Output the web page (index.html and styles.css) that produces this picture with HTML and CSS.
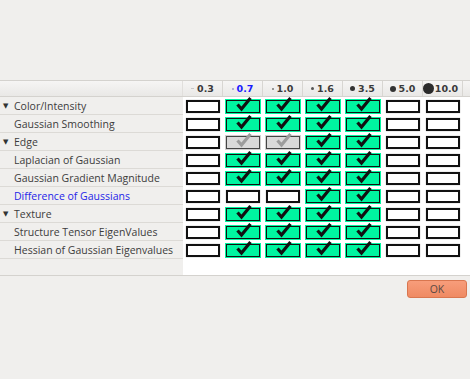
FILE: index.html
```html
<!DOCTYPE html>
<html>
<head>
<meta charset="utf-8">
<link rel="stylesheet" href="styles.css">
</head>
<body>
<div class="spacer"></div>
<div class="view">
  <div class="grid">
    <div class="corner"></div>
    <div class="hcell"><span class="dot d1"></span>0.3</div>
    <div class="hcell sel"><span class="dot d2"></span>0.7</div>
    <div class="hcell"><span class="dot d3"></span>1.0</div>
    <div class="hcell"><span class="dot d4"></span>1.6</div>
    <div class="hcell"><span class="dot d5"></span>3.5</div>
    <div class="hcell"><span class="dot d6"></span>5.0</div>
    <div class="hcell"><span class="dot d7"></span>10.0</div>
    <div class="hend"></div>
  </div>
  <div class="body">
    <div class="labels" id="labels"></div>
    <div class="cells" id="cells"></div>
  </div>
</div>
<div class="footer">
  <button class="ok">OK</button>
</div>
<script src="app.js"></script>
</body>
</html>
```

FILE: app.js
```js
const rows = [
  ["Color/Intensity", true, false, "0111100"],
  ["Gaussian Smoothing", false, false, "0111100"],
  ["Edge", true, false, "0gg1100"],
  ["Laplacian of Gaussian", false, false, "0111100"],
  ["Gaussian Gradient Magnitude", false, false, "0111100"],
  ["Difference of Gaussians", false, true, "0001100"],
  ["Texture", true, false, "0111100"],
  ["Structure Tensor EigenValues", false, false, "0111100"],
  ["Hessian of Gaussian Eigenvalues", false, false, "0111100"]
];
const check = '<svg class="chk" width="18" height="16" viewBox="0 0 18 16"><path d="M2.5 8.5 L6.5 13 L15.5 2" fill="none" stroke-width="3.2" stroke-linecap="butt" stroke-linejoin="miter"/></svg>';
const labels = document.getElementById("labels");
const cells = document.getElementById("cells");
rows.forEach(r => {
  const l = document.createElement("div");
  l.className = "lab" + (r[2] ? " blue" : "");
  l.innerHTML = (r[1] ? '<span class="tri">▼</span>' : '<span class="tri"></span>') + r[0];
  labels.appendChild(l);
  const row = document.createElement("div");
  row.className = "crow";
  r[3].split("").forEach(c => {
    const cell = document.createElement("div");
    cell.className = "cell";
    const b = document.createElement("div");
    b.className = "box" + (c === "1" ? " on" : c === "g" ? " gray" : "");
    if (c !== "0") b.innerHTML = check;
    cell.appendChild(b);
    row.appendChild(cell);
  });
  cells.appendChild(row);
});
```

FILE: styles.css
```css
html, body {
  margin: 0;
  padding: 0;
}
body {
  width: 470px;
  height: 379px;
  background: #f0efed;
  font-family: "Open Sans", "DejaVu Sans", sans-serif;
  color: #3c3c3c;
  overflow: hidden;
}
.spacer {
  height: 80px;
}
.view {
  border-top: 1px solid #d4d2ce;
  border-bottom: 1px solid #d4d2ce;
  height: 194px;
  display: flex;
  flex-direction: column;
}
.grid {
  display: grid;
  grid-template-columns: 183px repeat(7, 40px) 7px;
  height: 15px;
  background: linear-gradient(#f6f5f4, #e9e8e6);
  border-bottom: 1px solid #d4d2ce;
}
.corner {
  border-right: 1px solid #e1dfdc;
}
.hcell {
  display: flex;
  align-items: center;
  justify-content: center;
  gap: 3px;
  font-family: "DejaVu Sans", sans-serif;
  font-weight: bold;
  font-size: 9.5px;
  color: #3a3a3a;
  border-right: 1px solid #d8d6d2;
}
.hcell.sel {
  color: #1a1aff;
}
.dot {
  display: inline-block;
  border-radius: 50%;
  background: #333;
}
.d1 { width: 3px; height: 1px; background: #c8c8c8; border-radius: 0; }
.d2 { width: 2px; height: 2px; background: #9a9ac8; }
.d3 { width: 2px; height: 2px; background: #777; }
.d4 { width: 3px; height: 3px; background: #555; }
.d5 { width: 5px; height: 5px; background: #333; }
.d6 { width: 6px; height: 6px; background: #333; }
.d7 { width: 11px; height: 11px; background: #2b2b2b; margin-left: -4px; margin-right: -2px; }
.body {
  flex: 1;
  display: flex;
}
.labels {
  width: 183px;
  background: #f0efed;
  display: flex;
  flex-direction: column;
}
.lab {
  height: 17px;
  border-bottom: 1px solid #dcdad6;
  display: flex;
  align-items: center;
  font-size: 10.5px;
  color: #3c3c3c;
  white-space: nowrap;
}
.lab.blue {
  color: #2525e8;
}
.tri {
  display: inline-block;
  width: 14px;
  padding-left: 3px;
  box-sizing: border-box;
  font-size: 7px;
  color: #333;
}
.cells {
  flex: 1;
  background: #fff;
  display: flex;
  flex-direction: column;
}
.crow {
  display: flex;
  height: 18px;
}
.cell {
  width: 40px;
  display: flex;
  align-items: center;
  justify-content: center;
  padding-top: 1px;
  box-sizing: border-box;
}
.box {
  position: relative;
  width: 34px;
  height: 13px;
  box-sizing: border-box;
  border: 2px solid #111;
  background: #fff;
  box-shadow: 0 0 1px #999;
}
.box.on {
  background: #00f5a0;
  border: 1px solid #111;
  box-shadow: 0 0 0 1px #00f5a0;
}
.box.gray {
  background: #d9d9d9;
  border: 1px solid #444;
  box-shadow: 0 0 0 1px #cfcfcf;
}
.chk {
  position: absolute;
  left: 8px;
  top: -5px;
}
.chk path {
  stroke: #111;
}
.box.gray .chk path {
  stroke: #9c9c9c;
}
.footer {
  display: flex;
  justify-content: flex-end;
  padding: 4px 3px 0 0;
}
.ok {
  width: 60px;
  height: 18px;
  border: 1px solid #d9764f;
  border-radius: 3px;
  background: linear-gradient(#f79d7b, #ef8a63);
  color: #5a4a44;
  font-family: "Open Sans", sans-serif;
  font-size: 10.5px;
  padding: 0;
}
```
